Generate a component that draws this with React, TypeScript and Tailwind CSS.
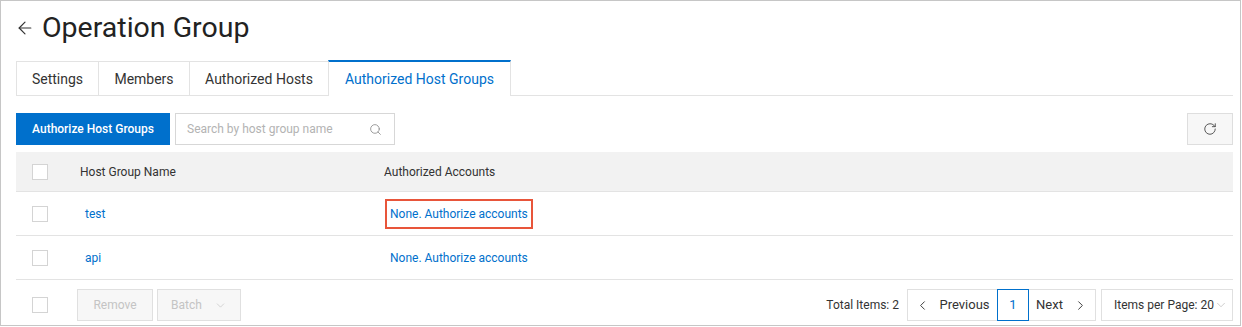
import React from 'react';
import {ArrowLeft, ChevronDown, ChevronLeft, ChevronRight, RotateCw, Search} from 'lucide-react';

const tabs = [
    {label: 'Settings', w: 'w-[83px]'},
    {label: 'Members', w: 'w-[92px]'},
    {label: 'Authorized Hosts', w: 'w-[140px]'},
];

const rows = ['test', 'api'];

const Checkbox = () => (
    <div className="w-4 h-4 bg-white border border-[#d4d4d4]"/>
);

const App = () => {
    return (
        <div className="w-[1241px] h-[326px] bg-white border border-[#c6c6c6] pl-[15px] pr-[7px] text-[#333] font-['Roboto',sans-serif]">
            {/* title */}
            <div className="flex items-center h-[36px] mt-[9px] mb-[14px]">
                <ArrowLeft size={20} strokeWidth={1.4} className="text-[#333] -ml-[1px] mr-[7px]"/>
                <h1 className="text-[28.5px] leading-[36px] text-[#222]">Operation Group</h1>
            </div>

            {/* tabs */}
            <div className="flex items-end h-[36px] border-b border-[#e3e3e3]">
                {tabs.map((t, i) => (
                    <div key={t.label}
                         className={`${t.w} ${i > 0 ? '-ml-px' : ''} h-[34px] flex items-center justify-center border border-b-0 border-[#e3e3e3] text-[14px] pt-[1px]`}>
                        {t.label}
                    </div>
                ))}
                <div className="w-[183px] -ml-px h-[36px] -mb-px bg-white flex items-center justify-center border-x border-[#e3e3e3] border-t-2 border-t-[#0070cc] text-[14px] text-[#0070cc]">
                    Authorized Host Groups
                </div>
            </div>

            {/* toolbar */}
            <div className="flex items-center mt-[17px] h-[32px]">
                <button className="h-[32px] w-[154px] bg-[#0070cc] text-white text-[12px] font-medium">
                    Authorize Host Groups
                </button>
                <div className="ml-[5px] h-[32px] w-[220px] border border-[#d7d7d7] flex items-center justify-between pl-[11px] pr-[12px]">
                    <span className="text-[12px] text-[#b3b3b3]">Search by host group name</span>
                    <Search size={13} strokeWidth={1.5} className="text-[#888]"/>
                </div>
                <button className="ml-auto h-[32px] w-[46px] bg-[#f7f7f7] border border-[#dedede] flex items-center justify-center">
                    <RotateCw size={14} strokeWidth={1.5} className="text-[#444]"/>
                </button>
            </div>

            {/* table */}
            <div className="mt-[7px] text-[12px]">
                <div className="flex items-center h-[40px] bg-[#f2f2f2] border-b border-[#e3e3e3]">
                    <div className="w-[48px] pl-[16px]"><Checkbox/></div>
                    <div className="w-[304px] pl-[16px]">Host Group Name</div>
                    <div className="pl-[16px]">Authorized Accounts</div>
                </div>
                {rows.map((r, i) => (
                    <div key={r} className="flex items-center h-[44px] border-b border-[#e3e3e3]">
                        <div className="w-[48px] pl-[16px]"><Checkbox/></div>
                        <div className="w-[304px] pl-[21px] text-[#0070cc]">{r}</div>
                        <div className="pl-[17px]">
                            <span className={`inline-block px-[3px] py-[4px] text-[#0070cc] border-2 ${i === 0 ? 'border-[#e8553a]' : 'border-transparent'}`}>
                                None. Authorize accounts
                            </span>
                        </div>
                    </div>
                ))}

                {/* footer */}
                <div className="flex items-start pt-[9px] h-[45px]">
                    <div className="w-[61px] pl-[16px] pt-[8px]"><Checkbox/></div>
                    <button className="h-[32px] w-[76px] bg-[#f7f7f7] border border-[#e0e0e0] text-[#c4c4c4]">Remove</button>
                    <button className="ml-[4px] h-[32px] w-[84px] bg-[#f7f7f7] border border-[#e0e0e0] text-[#c4c4c4] flex items-center justify-center gap-[12px]">
                        Batch <ChevronDown size={13} strokeWidth={1.3}/>
                    </button>

                    <div className="ml-auto flex items-center">
                        <span className="mr-[8px] text-[#333]">Total Items: 2</span>
                        <div className="flex h-[32px] border border-[#e0e0e0]">
                            <div className="w-[89px] flex items-center justify-center gap-[9px] text-[13px]">
                                <ChevronLeft size={15} strokeWidth={1.5}/> Previous
                            </div>
                            <div className="w-[32px] -my-px flex items-center justify-center border border-[#0070cc] text-[#0070cc] text-[13px]">1</div>
                            <div className="w-[66px] flex items-center justify-center gap-[10px] text-[13px]">
                                Next <ChevronRight size={15} strokeWidth={1.5}/>
                            </div>
                        </div>
                        <div className="ml-[5px] h-[32px] w-[132px] border border-[#e0e0e0] flex items-center pl-[12px]">
                            <span>Items per Page: 20</span>
                            <ChevronDown size={14} strokeWidth={1} className="text-[#aaa]"/>
                        </div>
                    </div>
                </div>
            </div>
        </div>
    )
}

export default App;
